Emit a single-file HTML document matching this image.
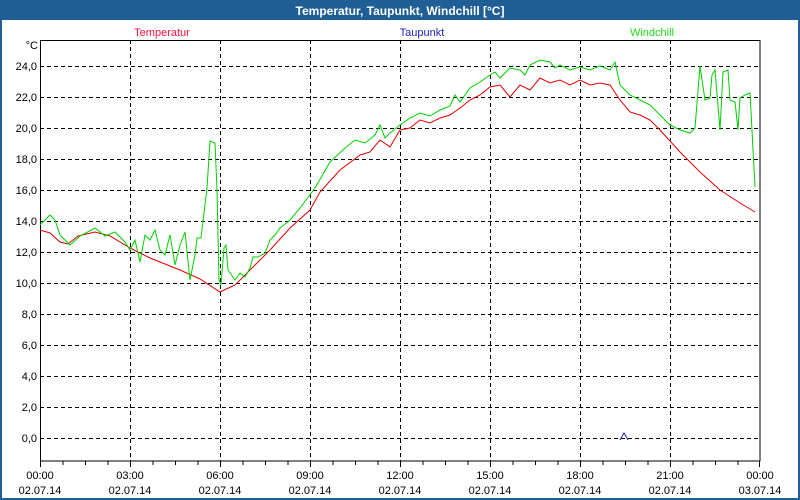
<!DOCTYPE html>
<html><head><meta charset="utf-8"><style>
html,body{margin:0;padding:0;width:800px;height:500px;overflow:hidden;background:#fff}
svg{display:block;font-family:"Liberation Sans",sans-serif}
</style></head><body>
<svg width="800" height="500" xmlns="http://www.w3.org/2000/svg">
<rect x="0" y="0" width="800" height="500" fill="#1f5f95"/>
<rect x="2" y="20" width="796" height="478" fill="#fff"/>
<text x="400" y="15" font-size="12" font-weight="bold" fill="#fff" text-anchor="middle">Temperatur, Taupunkt, Windchill [°C]</text>
<text x="162" y="36" font-size="11" fill="#ff1040" text-anchor="middle">Temperatur</text>
<text x="422" y="36" font-size="11" fill="#2020c0" text-anchor="middle">Taupunkt</text>
<text x="652" y="36" font-size="11" fill="#20e020" text-anchor="middle">Windchill</text>
<g stroke="#000" stroke-dasharray="4,3" stroke-width="1">
<path d="M40 66.5H760M40 97.5H760M40 128.5H760M40 159.5H760M40 190.5H760M40 221.5H760M40 252.5H760M40 283.5H760M40 314.5H760M40 345.5H760M40 376.5H760M40 407.5H760M40 438.5H760"/>
<path d="M130.5 40V461M220.5 40V461M310.5 40V461M400.5 40V461M490.5 40V461M580.5 40V461M670.5 40V461"/>
</g>
<rect x="40.5" y="40.5" width="719.5" height="420.5" fill="none" stroke="#000"/>
<g stroke="#000"><path d="M40.5 461v6M63 461v4M85.5 461v4M108 461v4M130.5 461v6M153 461v4M175.5 461v4M198 461v4M220.5 461v6M243 461v4M265.5 461v4M288 461v4M310.5 461v6M333 461v4M355.5 461v4M378 461v4M400.5 461v6M423 461v4M445.5 461v4M468 461v4M490.5 461v6M513 461v4M535.5 461v4M558 461v4M580.5 461v6M603 461v4M625.5 461v4M648 461v4M670.5 461v6M693 461v4M715.5 461v4M738 461v4M759.5 461v6"/></g>
<g font-size="11" fill="#000" text-anchor="end">
<text x="38" y="49">°C</text>
<text x="37" y="70">24,0</text><text x="37" y="101">22,0</text><text x="37" y="132">20,0</text><text x="37" y="163">18,0</text><text x="37" y="194">16,0</text><text x="37" y="225">14,0</text><text x="37" y="256">12,0</text><text x="37" y="287">10,0</text><text x="37" y="318">8,0</text><text x="37" y="349">6,0</text><text x="37" y="380">4,0</text><text x="37" y="411">2,0</text><text x="37" y="442">0,0</text>
</g>
<g font-size="11" fill="#000" text-anchor="middle">
<text x="40" y="479">00:00</text><text x="40" y="494">02.07.14</text>
<text x="130" y="479">03:00</text><text x="130" y="494">02.07.14</text>
<text x="220" y="479">06:00</text><text x="220" y="494">02.07.14</text>
<text x="310" y="479">09:00</text><text x="310" y="494">02.07.14</text>
<text x="400" y="479">12:00</text><text x="400" y="494">02.07.14</text>
<text x="490" y="479">15:00</text><text x="490" y="494">02.07.14</text>
<text x="580" y="479">18:00</text><text x="580" y="494">02.07.14</text>
<text x="670" y="479">21:00</text><text x="670" y="494">02.07.14</text>
<text x="760" y="479">00:00</text><text x="760" y="494">03.07.14</text>
</g>
<polyline fill="none" stroke="#e00000" stroke-width="1" points="40,230 50,233 60,242 68,244 78,236 95,232 110,236 130,248 150,258 180,270 200,279 220,292 235,285 250,270 270,250 290,228 310,210 320,192 340,170 360,155 370,152 380,140 390,147 400,130 410,128 420,120 430,123 440,118 450,115 460,108 470,100 480,95 490,87 500,85 510,97 520,85 530,90 540,78 550,83 560,80 570,85 580,80 590,85 600,83 610,85 620,100 630,112 640,115 650,120 660,130 680,152 700,172 720,190 740,203 755,212"/>
<polyline fill="none" stroke="#00d000" stroke-width="1" points="40,225 50,215 55,220 60,235 70,245 80,236 95,228 105,236 115,232 125,242 130,250 135,240 140,262 145,235 150,240 155,230 160,250 165,255 170,235 175,265 180,245 185,232 190,280 195,255 197,238 201,238 207,188 210,141 215,143 217,190 219,280 221,285 224,248 226,245 228,270 235,280 240,273 245,277 250,268 253,257 258,257 265,253 270,240 275,235 280,228 290,220 300,208 315,188 330,162 345,148 355,140 365,143 375,135 380,125 385,138 390,133 400,125 410,118 420,113 430,116 440,110 450,106 455,95 460,102 470,88 480,82 490,75 495,72 500,78 510,68 520,70 525,75 530,65 540,60 550,62 555,68 560,65 570,70 580,67 590,70 600,66 610,70 615,62 620,85 630,95 640,100 650,105 660,115 670,125 680,130 690,133 695,128 700,66 705,100 710,98 712,75 715,70 720,130 723,72 728,70 730,100 735,102 738,130 740,98 745,95 750,93 755,187"/>
<polyline fill="none" stroke="#2020c0" points="620,440 624,433 628,440"/>
</svg>
</body></html>
